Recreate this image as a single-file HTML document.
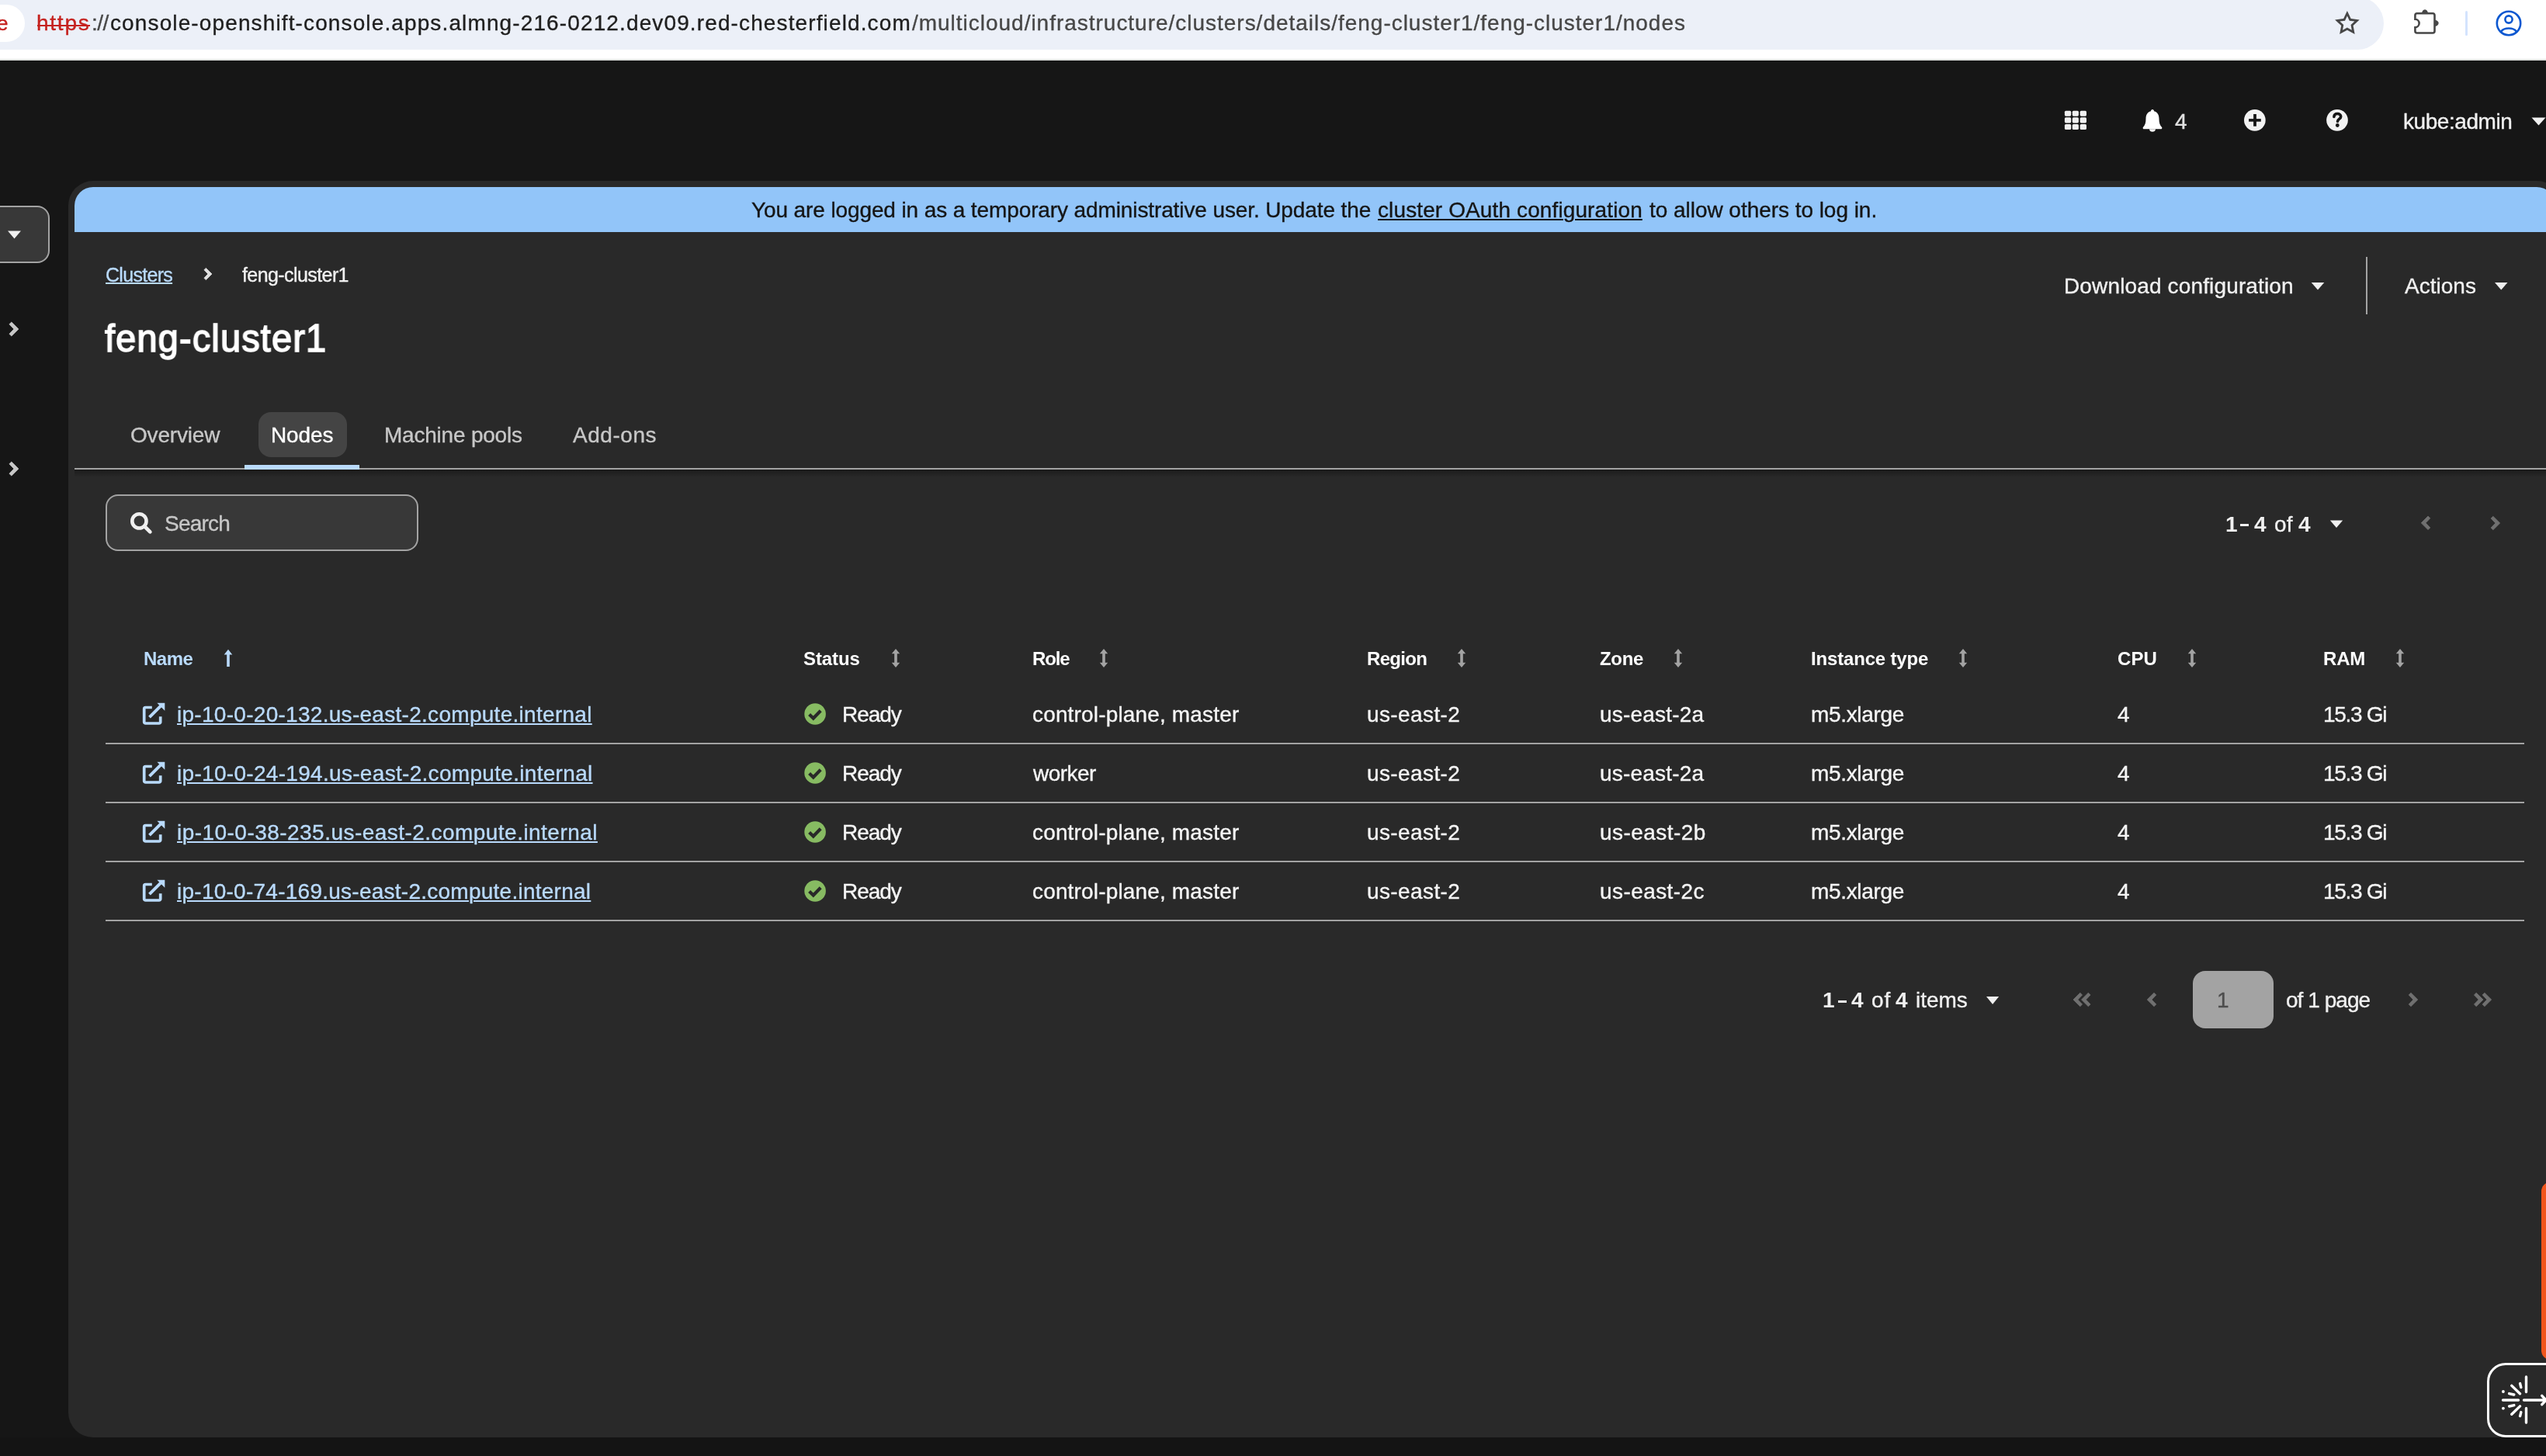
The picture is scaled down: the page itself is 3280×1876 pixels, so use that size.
<!DOCTYPE html>
<html><head><meta charset="utf-8"><style>
html,body{margin:0;padding:0;}
body{width:3280px;height:1876px;overflow:hidden;background:#161616;position:relative;font-family:"Liberation Sans",sans-serif;}
.t{position:absolute;white-space:nowrap;will-change:transform;}
.r{position:absolute;display:block;}
</style></head><body>
<div class="r" style="left:0;top:1852px;width:3280px;height:24px;background:#141414;"></div>
<div class="r" style="left:0px;top:0px;width:3280px;height:77px;background:#ffffff;"></div>
<div class="r" style="left:0px;top:76px;width:3280px;height:2px;background:#dfe2df;"></div>
<div class="r" style="left:-40px;top:-4px;width:3111px;height:68px;background:#ecf0f8;border-radius:0 34px 34px 0;"></div>
<div class="r" style="left:-40px;top:6px;width:72px;height:48px;background:#ffffff;border-radius:0 24px 24px 0;"></div>
<div class="t" style="left:-4.00px;top:16.69px;font-size:26px;line-height:26px;color:#c5221f;letter-spacing:0.000px;-webkit-text-stroke:0.35px #c5221f;">e</div>
<div class="t" style="left:47.00px;top:16.40px;font-size:28px;line-height:28px;color:#c5221f;letter-spacing:1.750px;-webkit-text-stroke:0.35px #c5221f;">https</div>
<div class="r" style="left:48px;top:32px;width:68px;height:2px;background:#c5221f;"></div>
<div class="t" style="left:118.00px;top:16.40px;font-size:28px;line-height:28px;color:#474747;letter-spacing:-0.500px;-webkit-text-stroke:0.35px #474747;">://</div>
<div class="t" style="left:142.30px;top:16.40px;font-size:28px;line-height:28px;color:#1f1f1f;letter-spacing:1.123px;-webkit-text-stroke:0.35px #1f1f1f;">console-openshift-console.apps.almng-216-0212.dev09.red-chesterfield.com</div>
<div class="t" style="left:1175.00px;top:16.40px;font-size:28px;line-height:28px;color:#474747;letter-spacing:0.982px;-webkit-text-stroke:0.35px #474747;">/multicloud/infrastructure/clusters/details/feng-cluster1/feng-cluster1/nodes</div>
<svg class="r" style="left:3000px;top:8px;" width="50" height="44" viewBox="3000 8 50 44"><path d="M3023.90 14.00 L3028.66 24.05 L3039.69 25.47 L3031.60 33.10 L3033.66 44.03 L3023.90 38.70 L3014.14 44.03 L3016.20 33.10 L3008.11 25.47 L3019.14 24.05 Z M3023.90 20.60 L3026.78 26.64 L3033.41 27.51 L3028.56 32.11 L3029.78 38.69 L3023.90 35.50 L3018.02 38.69 L3019.24 32.11 L3014.39 27.51 L3021.02 26.64 Z" fill="#474747" fill-rule="evenodd"/></svg>
<svg class="r" style="left:3100px;top:5px;" width="60" height="50" viewBox="3100 5 60 50"><path d="M3111.4 24.8 V19.8 A2.5 2.5 0 0 1 3113.9 17.3 H3134 A2.5 2.5 0 0 1 3136.5 19.8 V40 A2.5 2.5 0 0 1 3134 42.5 H3113.9 A2.5 2.5 0 0 1 3111.4 40 V35.2 A5.2 5.2 0 0 0 3111.4 24.8 Z" fill="none" stroke="#474747" stroke-width="2.6"/><path d="M3120 17.5 A4 5.3 0 0 1 3128 17.5 Z M3136.3 25.8 A5.4 4.05 0 0 1 3136.3 33.9 Z" fill="#474747"/></svg>
<div class="r" style="left:3176px;top:14px;width:3px;height:32px;background:#d3e3fd;border-radius:2px;"></div>
<svg class="r" style="left:3214px;top:12px;" width="36" height="36" viewBox="0 0 36 36"><circle cx="18" cy="18" r="15.2" fill="none" stroke="#0b57d0" stroke-width="2.6"/><circle cx="18" cy="13" r="4.6" fill="none" stroke="#0b57d0" stroke-width="2.6"/><path d="M8.2 28.5 C12 23.2 24 23.2 27.8 28.5" fill="none" stroke="#0b57d0" stroke-width="2.6"/></svg>
<svg class="r" style="left:2650px;top:135px;" width="45" height="40" viewBox="0 0 45 40"><rect x="9.9" y="7.7" width="8.3" height="7.0" rx="1.6" fill="#f0f0f0"/><rect x="9.9" y="16.2" width="8.3" height="7.2" rx="1.6" fill="#f0f0f0"/><rect x="9.9" y="25.0" width="8.3" height="7.1" rx="1.6" fill="#f0f0f0"/><rect x="19.8" y="7.7" width="8.1" height="7.0" rx="1.6" fill="#f0f0f0"/><rect x="19.8" y="16.2" width="8.1" height="7.2" rx="1.6" fill="#f0f0f0"/><rect x="19.8" y="25.0" width="8.1" height="7.1" rx="1.6" fill="#f0f0f0"/><rect x="29.7" y="7.7" width="8.3" height="7.0" rx="1.6" fill="#f0f0f0"/><rect x="29.7" y="16.2" width="8.3" height="7.2" rx="1.6" fill="#f0f0f0"/><rect x="29.7" y="25.0" width="8.3" height="7.1" rx="1.6" fill="#f0f0f0"/></svg>
<svg class="r" style="left:2755px;top:138px;" width="36" height="34" viewBox="0 0 36 34"><path d="M18 3 C19.3 3 20 4 20 5.2 C24.5 6.3 26.5 10 26.5 15 C26.5 20 27.5 23.5 30.3 26.3 L30.3 27 C30.3 27.8 29.8 28.3 29 28.3 L7 28.3 C6.2 28.3 5.7 27.8 5.7 27 L5.7 26.3 C8.5 23.5 9.5 20 9.5 15 C9.5 10 11.5 6.3 16 5.2 C16 4 16.7 3 18 3 Z M14 28.5 L22 28.5 C22 30.5 20.2 31.8 18 31.8 C15.8 31.8 14 30.5 14 28.5 Z" fill="#ffffff"/></svg>
<div class="t" style="left:2802.00px;top:143.00px;font-size:28px;line-height:28px;color:#e0e0e0;letter-spacing:0.000px;-webkit-text-stroke:0.35px #e0e0e0;">4</div>
<svg class="r" style="left:2886px;top:136px;" width="38" height="38" viewBox="0 0 38 38"><circle cx="18.85" cy="18.85" r="13.85" fill="#f2f2f2"/><rect x="11.1" y="17.1" width="15.7" height="3.6" fill="#161616"/><rect x="17.1" y="11" width="3.8" height="15.7" fill="#161616"/></svg>
<svg class="r" style="left:2992px;top:136px;" width="38" height="38" viewBox="0 0 38 38"><circle cx="19" cy="18.85" r="13.85" fill="#f2f2f2"/><path d="M14.9 14.4 C15.1 11.9 16.9 10.5 19.3 10.5 C21.8 10.5 23.7 12 23.7 14.2 C23.7 17.3 19.5 17.5 19.5 20.4" fill="none" stroke="#161616" stroke-width="3.6" stroke-linecap="round"/><circle cx="19.3" cy="25.5" r="2.4" fill="#161616"/></svg>
<div class="t" style="left:3096.00px;top:142.80px;font-size:28px;line-height:28px;color:#f0f0f0;letter-spacing:-0.444px;-webkit-text-stroke:0.35px #f0f0f0;">kube:admin</div>
<svg class="r" style="left:3258px;top:148px;" width="24" height="16" viewBox="0 0 24 16"><path d="M3.5 3.6 L21.5 3.6 L12.5 13.5 Z" fill="#f0f0f0"/></svg>
<div class="r" style="left:-20px;top:265px;width:84px;height:74px;background:#383838;border:2px solid #a3a3a3;border-radius:16px;box-sizing:border-box;"></div>
<svg class="r" style="left:6px;top:295px;" width="26" height="16" viewBox="0 0 26 16"><path d="M4 2.5 L21 2.5 L12.5 12.5 Z" fill="#f0f0f0"/></svg>
<svg class="r" style="left:10px;top:413px;" width="17" height="24" viewBox="10 413 17 24"><path d="M23.90 424.00 L14.84 415.04 L11.95 417.72 L17.93 424.00 L11.95 430.28 L14.84 432.96 Z" fill="#c7c7c7" stroke="#c7c7c7" stroke-width="0.8" stroke-linejoin="round"/></svg>
<svg class="r" style="left:10px;top:593px;" width="17" height="24" viewBox="10 593 17 24"><path d="M23.90 604.00 L14.84 595.04 L11.95 597.72 L17.93 604.00 L11.95 610.28 L14.84 612.96 Z" fill="#c7c7c7" stroke="#c7c7c7" stroke-width="0.8" stroke-linejoin="round"/></svg>
<div class="r" style="left:88px;top:233px;width:3212px;height:1619px;background:#292929;border-radius:32px;"></div>
<div class="r" style="left:96px;top:241px;width:3196px;height:58px;background:#92c5f9;border-radius:24px 24px 0 0;"></div>
<div class="t" style="left:968.00px;top:256.80px;font-size:28px;line-height:28px;color:#151515;letter-spacing:-0.111px;-webkit-text-stroke:0.35px #151515;">You are logged in as a temporary administrative user. Update the</div>
<div class="t" style="left:1775.00px;top:256.80px;font-size:28px;line-height:28px;color:#151515;letter-spacing:0.115px;-webkit-text-stroke:0.35px #151515;text-decoration:underline;text-decoration-thickness:2px;text-underline-offset:2px;">cluster OAuth configuration</div>
<div class="t" style="left:2125.00px;top:256.80px;font-size:28px;line-height:28px;color:#151515;letter-spacing:-0.040px;-webkit-text-stroke:0.35px #151515;">to allow others to log in.</div>
<div class="t" style="left:135.90px;top:341.74px;font-size:25px;line-height:25px;color:#b9dafc;letter-spacing:-0.700px;-webkit-text-stroke:0.35px #b9dafc;text-decoration:underline;text-decoration-thickness:2px;text-underline-offset:1px;">Clusters</div>
<svg class="r" style="left:261px;top:343px;" width="16" height="21" viewBox="261 343 16 21"><path d="M273.00 353.00 L265.34 345.43 L262.91 347.69 L267.95 353.00 L262.91 358.31 L265.34 360.57 Z" fill="#e0e0e0" stroke="#e0e0e0" stroke-width="0.8" stroke-linejoin="round"/></svg>
<div class="t" style="left:312.00px;top:341.74px;font-size:25px;line-height:25px;color:#f0f0f0;letter-spacing:-0.583px;-webkit-text-stroke:0.35px #f0f0f0;">feng-cluster1</div>
<div class="t" style="left:135.40px;top:411.18px;font-size:50px;line-height:50px;color:#ffffff;letter-spacing:1.191px;-webkit-text-stroke:1.6px #ffffff;transform:scaleX(0.94);transform-origin:0 0;">feng-cluster1</div>
<div class="t" style="left:2659.00px;top:355.00px;font-size:28px;line-height:28px;color:#f0f0f0;letter-spacing:0.143px;-webkit-text-stroke:0.35px #f0f0f0;">Download configuration</div>
<svg class="r" style="left:2974px;top:360px;" width="24" height="18" viewBox="0 0 24 18"><path d="M3.7 4 L20.3 4 L12 13.6 Z" fill="#f0f0f0"/></svg>
<div class="r" style="left:3048px;top:331px;width:2px;height:74px;background:#a3a3a3;"></div>
<div class="t" style="left:3097.60px;top:355.00px;font-size:28px;line-height:28px;color:#f0f0f0;letter-spacing:0.017px;-webkit-text-stroke:0.35px #f0f0f0;">Actions</div>
<svg class="r" style="left:3210px;top:360px;" width="24" height="18" viewBox="0 0 24 18"><path d="M4 4 L20.5 4 L12.25 13.6 Z" fill="#f0f0f0"/></svg>
<div class="t" style="left:168.00px;top:547.30px;font-size:28px;line-height:28px;color:#c7c7c7;letter-spacing:-0.171px;-webkit-text-stroke:0.35px #c7c7c7;">Overview</div>
<div class="r" style="left:333px;top:531px;width:114px;height:58px;background:#444444;border-radius:16px;"></div>
<div class="t" style="left:349.00px;top:547.30px;font-size:28px;line-height:28px;color:#ffffff;letter-spacing:-0.100px;-webkit-text-stroke:0.35px #ffffff;">Nodes</div>
<div class="t" style="left:495.00px;top:547.30px;font-size:28px;line-height:28px;color:#c7c7c7;letter-spacing:-0.217px;-webkit-text-stroke:0.35px #c7c7c7;">Machine pools</div>
<div class="t" style="left:737.80px;top:547.30px;font-size:28px;line-height:28px;color:#c7c7c7;letter-spacing:0.533px;-webkit-text-stroke:0.35px #c7c7c7;">Add-ons</div>
<div class="r" style="left:96px;top:605px;width:3204px;height:10px;background:linear-gradient(#1a1a1a,rgba(41,41,41,0));"></div>
<div class="r" style="left:96px;top:603px;width:3200px;height:2px;background:#a3a3a3;"></div>
<div class="r" style="left:315px;top:599px;width:148px;height:6px;background:#b9dafc;"></div>
<div class="r" style="left:136px;top:637px;width:403px;height:73px;background:#383838;border:2px solid #a3a3a3;border-radius:16px;box-sizing:border-box;"></div>
<svg class="r" style="left:164px;top:656px;" width="36" height="36" viewBox="0 0 36 36"><circle cx="15.4" cy="15.4" r="9.1" fill="none" stroke="#f0f0f0" stroke-width="4.6"/><path d="M22 22 L29.4 29.4" stroke="#f0f0f0" stroke-width="4.6" stroke-linecap="round"/></svg>
<div class="t" style="left:211.50px;top:661.10px;font-size:28px;line-height:28px;color:#c7c7c7;letter-spacing:-0.800px;-webkit-text-stroke:0.35px #c7c7c7;">Search</div>
<div class="t" style="left:2867.00px;top:661.50px;font-size:28px;line-height:28px;color:#f0f0f0;letter-spacing:0.000px;font-weight:700;">1</div>
<div class="r" style="left:2886px;top:674.8px;width:11px;height:3.4px;background:#f0f0f0;"></div>
<div class="t" style="left:2903.70px;top:661.50px;font-size:28px;line-height:28px;color:#f0f0f0;letter-spacing:0.000px;font-weight:700;">4</div>
<div class="t" style="left:2929.80px;top:661.50px;font-size:28px;line-height:28px;color:#f0f0f0;letter-spacing:0.300px;-webkit-text-stroke:0.35px #f0f0f0;">of</div>
<div class="t" style="left:2960.80px;top:661.50px;font-size:28px;line-height:28px;color:#f0f0f0;letter-spacing:0.000px;font-weight:700;">4</div>
<svg class="r" style="left:2998px;top:666px;" width="24" height="18" viewBox="0 0 24 18"><path d="M3.9 4.4 L20.2 4.4 L12 14 Z" fill="#f0f0f0"/></svg>
<svg class="r" style="left:3117px;top:663px;" width="17" height="24" viewBox="3117 663 17 24"><path d="M3119.20 673.80 L3128.00 665.10 L3130.80 667.70 L3125.00 673.80 L3130.80 679.90 L3128.00 682.50 Z" fill="#707070" stroke="#707070" stroke-width="0.8" stroke-linejoin="round"/></svg>
<svg class="r" style="left:3207px;top:663px;" width="17" height="24" viewBox="3207 663 17 24"><path d="M3220.70 674.00 L3211.90 665.30 L3209.10 667.90 L3214.90 674.00 L3209.10 680.10 L3211.90 682.70 Z" fill="#707070" stroke="#707070" stroke-width="0.8" stroke-linejoin="round"/></svg>
<div class="t" style="left:184.50px;top:837.38px;font-size:24px;line-height:24px;color:#b9dafc;letter-spacing:-0.500px;font-weight:700;">Name</div>
<svg class="r" style="left:282px;top:834px;" width="24" height="28" viewBox="0 0 24 28"><path d="M12 2.7 L17.3 9.5 L13.8 9.5 L13.8 25 L10.2 25 L10.2 9.5 L6.7 9.5 Z" fill="#b9dafc"/></svg>
<div class="t" style="left:1035.40px;top:837.38px;font-size:24px;line-height:24px;color:#ffffff;letter-spacing:-0.100px;font-weight:700;">Status</div>
<svg class="r" style="left:1142px;top:834px;" width="24" height="28" viewBox="0 0 24 28"><path d="M12 2 L17.2 8.2 L13.8 8.2 L13.8 19.8 L17.2 19.8 L12 26 L6.8 19.8 L10.2 19.8 L10.2 8.2 L6.8 8.2 Z" fill="#a3a3a3"/></svg>
<div class="t" style="left:1329.50px;top:837.38px;font-size:24px;line-height:24px;color:#ffffff;letter-spacing:-1.167px;font-weight:700;">Role</div>
<svg class="r" style="left:1410px;top:834px;" width="24" height="28" viewBox="0 0 24 28"><path d="M12 2 L17.2 8.2 L13.8 8.2 L13.8 19.8 L17.2 19.8 L12 26 L6.8 19.8 L10.2 19.8 L10.2 8.2 L6.8 8.2 Z" fill="#a3a3a3"/></svg>
<div class="t" style="left:1760.80px;top:837.38px;font-size:24px;line-height:24px;color:#ffffff;letter-spacing:-0.660px;font-weight:700;">Region</div>
<svg class="r" style="left:1871px;top:834px;" width="24" height="28" viewBox="0 0 24 28"><path d="M12 2 L17.2 8.2 L13.8 8.2 L13.8 19.8 L17.2 19.8 L12 26 L6.8 19.8 L10.2 19.8 L10.2 8.2 L6.8 8.2 Z" fill="#a3a3a3"/></svg>
<div class="t" style="left:2061.00px;top:837.38px;font-size:24px;line-height:24px;color:#ffffff;letter-spacing:-0.333px;font-weight:700;">Zone</div>
<svg class="r" style="left:2150px;top:834px;" width="24" height="28" viewBox="0 0 24 28"><path d="M12 2 L17.2 8.2 L13.8 8.2 L13.8 19.8 L17.2 19.8 L12 26 L6.8 19.8 L10.2 19.8 L10.2 8.2 L6.8 8.2 Z" fill="#a3a3a3"/></svg>
<div class="t" style="left:2332.70px;top:837.38px;font-size:24px;line-height:24px;color:#ffffff;letter-spacing:-0.167px;font-weight:700;">Instance type</div>
<svg class="r" style="left:2517px;top:834px;" width="24" height="28" viewBox="0 0 24 28"><path d="M12 2 L17.2 8.2 L13.8 8.2 L13.8 19.8 L17.2 19.8 L12 26 L6.8 19.8 L10.2 19.8 L10.2 8.2 L6.8 8.2 Z" fill="#a3a3a3"/></svg>
<div class="t" style="left:2728.20px;top:837.38px;font-size:24px;line-height:24px;color:#ffffff;letter-spacing:0.100px;font-weight:700;">CPU</div>
<svg class="r" style="left:2812px;top:834px;" width="24" height="28" viewBox="0 0 24 28"><path d="M12 2 L17.2 8.2 L13.8 8.2 L13.8 19.8 L17.2 19.8 L12 26 L6.8 19.8 L10.2 19.8 L10.2 8.2 L6.8 8.2 Z" fill="#a3a3a3"/></svg>
<div class="t" style="left:2992.70px;top:837.38px;font-size:24px;line-height:24px;color:#ffffff;letter-spacing:-0.200px;font-weight:700;">RAM</div>
<svg class="r" style="left:3080px;top:834px;" width="24" height="28" viewBox="0 0 24 28"><path d="M12 2 L17.2 8.2 L13.8 8.2 L13.8 19.8 L17.2 19.8 L12 26 L6.8 19.8 L10.2 19.8 L10.2 8.2 L6.8 8.2 Z" fill="#a3a3a3"/></svg>
<svg class="r" style="left:176px;top:900.0px;" width="40" height="40" viewBox="176 900 40 40"><path d="M195.8 911.5 H187.5 A1.8 1.8 0 0 0 185.7 913.3 V930.2 A1.8 1.8 0 0 0 187.5 932 H204.9 A1.8 1.8 0 0 0 206.7 930.2 V923.3" fill="none" stroke="#b9dafc" stroke-width="3.7"/><path d="M202.4 905.8 H212.3 V915.7 Z" fill="#b9dafc"/><path d="M192.5 924.2 L207.5 909.2" stroke="#b9dafc" stroke-width="3.9"/></svg>
<div class="t" style="left:227.50px;top:906.60px;font-size:28px;line-height:28px;color:#b9dafc;letter-spacing:0.287px;-webkit-text-stroke:0.35px #b9dafc;text-decoration:underline;text-decoration-thickness:2px;text-underline-offset:2px;">ip-10-0-20-132.us-east-2.compute.internal</div>
<svg class="r" style="left:1032px;top:902.0px;" width="36" height="36" viewBox="0 0 36 36"><circle cx="18.1" cy="18" r="13.8" fill="#87bb62"/><path d="M10.6 18.4 L15.8 23.5 L25.2 13.8" fill="none" stroke="#292929" stroke-width="4.2" stroke-linecap="butt"/></svg>
<div class="t" style="left:1084.90px;top:906.60px;font-size:28px;line-height:28px;color:#f5f5f5;letter-spacing:-1.075px;-webkit-text-stroke:0.35px #f5f5f5;">Ready</div>
<div class="t" style="left:1329.50px;top:906.60px;font-size:28px;line-height:28px;color:#f5f5f5;letter-spacing:0.160px;-webkit-text-stroke:0.35px #f5f5f5;">control-plane, master</div>
<div class="t" style="left:1760.80px;top:906.60px;font-size:28px;line-height:28px;color:#f5f5f5;letter-spacing:0.400px;-webkit-text-stroke:0.35px #f5f5f5;">us-east-2</div>
<div class="t" style="left:2061.00px;top:906.60px;font-size:28px;line-height:28px;color:#f5f5f5;letter-spacing:0.200px;-webkit-text-stroke:0.35px #f5f5f5;">us-east-2a</div>
<div class="t" style="left:2332.70px;top:906.60px;font-size:28px;line-height:28px;color:#f5f5f5;letter-spacing:-0.337px;-webkit-text-stroke:0.35px #f5f5f5;">m5.xlarge</div>
<div class="t" style="left:2728.00px;top:906.60px;font-size:28px;line-height:28px;color:#f5f5f5;letter-spacing:0.000px;-webkit-text-stroke:0.35px #f5f5f5;">4</div>
<div class="t" style="left:2992.70px;top:906.60px;font-size:28px;line-height:28px;color:#f5f5f5;letter-spacing:-1.283px;-webkit-text-stroke:0.35px #f5f5f5;">15.3 Gi</div>
<div class="r" style="left:136px;top:957px;width:3116px;height:2px;background:#a3a3a3;"></div>
<svg class="r" style="left:176px;top:976.0px;" width="40" height="40" viewBox="176 900 40 40"><path d="M195.8 911.5 H187.5 A1.8 1.8 0 0 0 185.7 913.3 V930.2 A1.8 1.8 0 0 0 187.5 932 H204.9 A1.8 1.8 0 0 0 206.7 930.2 V923.3" fill="none" stroke="#b9dafc" stroke-width="3.7"/><path d="M202.4 905.8 H212.3 V915.7 Z" fill="#b9dafc"/><path d="M192.5 924.2 L207.5 909.2" stroke="#b9dafc" stroke-width="3.9"/></svg>
<div class="t" style="left:227.50px;top:982.60px;font-size:28px;line-height:28px;color:#b9dafc;letter-spacing:0.307px;-webkit-text-stroke:0.35px #b9dafc;text-decoration:underline;text-decoration-thickness:2px;text-underline-offset:2px;">ip-10-0-24-194.us-east-2.compute.internal</div>
<svg class="r" style="left:1032px;top:978.0px;" width="36" height="36" viewBox="0 0 36 36"><circle cx="18.1" cy="18" r="13.8" fill="#87bb62"/><path d="M10.6 18.4 L15.8 23.5 L25.2 13.8" fill="none" stroke="#292929" stroke-width="4.2" stroke-linecap="butt"/></svg>
<div class="t" style="left:1084.90px;top:982.60px;font-size:28px;line-height:28px;color:#f5f5f5;letter-spacing:-1.075px;-webkit-text-stroke:0.35px #f5f5f5;">Ready</div>
<div class="t" style="left:1330.50px;top:982.60px;font-size:28px;line-height:28px;color:#f5f5f5;letter-spacing:-0.527px;-webkit-text-stroke:0.35px #f5f5f5;">worker</div>
<div class="t" style="left:1760.80px;top:982.60px;font-size:28px;line-height:28px;color:#f5f5f5;letter-spacing:0.400px;-webkit-text-stroke:0.35px #f5f5f5;">us-east-2</div>
<div class="t" style="left:2061.00px;top:982.60px;font-size:28px;line-height:28px;color:#f5f5f5;letter-spacing:0.200px;-webkit-text-stroke:0.35px #f5f5f5;">us-east-2a</div>
<div class="t" style="left:2332.70px;top:982.60px;font-size:28px;line-height:28px;color:#f5f5f5;letter-spacing:-0.337px;-webkit-text-stroke:0.35px #f5f5f5;">m5.xlarge</div>
<div class="t" style="left:2728.00px;top:982.60px;font-size:28px;line-height:28px;color:#f5f5f5;letter-spacing:0.000px;-webkit-text-stroke:0.35px #f5f5f5;">4</div>
<div class="t" style="left:2992.70px;top:982.60px;font-size:28px;line-height:28px;color:#f5f5f5;letter-spacing:-1.283px;-webkit-text-stroke:0.35px #f5f5f5;">15.3 Gi</div>
<div class="r" style="left:136px;top:1033px;width:3116px;height:2px;background:#a3a3a3;"></div>
<svg class="r" style="left:176px;top:1052.0px;" width="40" height="40" viewBox="176 900 40 40"><path d="M195.8 911.5 H187.5 A1.8 1.8 0 0 0 185.7 913.3 V930.2 A1.8 1.8 0 0 0 187.5 932 H204.9 A1.8 1.8 0 0 0 206.7 930.2 V923.3" fill="none" stroke="#b9dafc" stroke-width="3.7"/><path d="M202.4 905.8 H212.3 V915.7 Z" fill="#b9dafc"/><path d="M192.5 924.2 L207.5 909.2" stroke="#b9dafc" stroke-width="3.9"/></svg>
<div class="t" style="left:227.50px;top:1058.60px;font-size:28px;line-height:28px;color:#b9dafc;letter-spacing:0.463px;-webkit-text-stroke:0.35px #b9dafc;text-decoration:underline;text-decoration-thickness:2px;text-underline-offset:2px;">ip-10-0-38-235.us-east-2.compute.internal</div>
<svg class="r" style="left:1032px;top:1054.0px;" width="36" height="36" viewBox="0 0 36 36"><circle cx="18.1" cy="18" r="13.8" fill="#87bb62"/><path d="M10.6 18.4 L15.8 23.5 L25.2 13.8" fill="none" stroke="#292929" stroke-width="4.2" stroke-linecap="butt"/></svg>
<div class="t" style="left:1084.90px;top:1058.60px;font-size:28px;line-height:28px;color:#f5f5f5;letter-spacing:-1.075px;-webkit-text-stroke:0.35px #f5f5f5;">Ready</div>
<div class="t" style="left:1329.50px;top:1058.60px;font-size:28px;line-height:28px;color:#f5f5f5;letter-spacing:0.160px;-webkit-text-stroke:0.35px #f5f5f5;">control-plane, master</div>
<div class="t" style="left:1760.80px;top:1058.60px;font-size:28px;line-height:28px;color:#f5f5f5;letter-spacing:0.400px;-webkit-text-stroke:0.35px #f5f5f5;">us-east-2</div>
<div class="t" style="left:2061.00px;top:1058.60px;font-size:28px;line-height:28px;color:#f5f5f5;letter-spacing:0.444px;-webkit-text-stroke:0.35px #f5f5f5;">us-east-2b</div>
<div class="t" style="left:2332.70px;top:1058.60px;font-size:28px;line-height:28px;color:#f5f5f5;letter-spacing:-0.337px;-webkit-text-stroke:0.35px #f5f5f5;">m5.xlarge</div>
<div class="t" style="left:2728.00px;top:1058.60px;font-size:28px;line-height:28px;color:#f5f5f5;letter-spacing:0.000px;-webkit-text-stroke:0.35px #f5f5f5;">4</div>
<div class="t" style="left:2992.70px;top:1058.60px;font-size:28px;line-height:28px;color:#f5f5f5;letter-spacing:-1.283px;-webkit-text-stroke:0.35px #f5f5f5;">15.3 Gi</div>
<div class="r" style="left:136px;top:1109px;width:3116px;height:2px;background:#a3a3a3;"></div>
<svg class="r" style="left:176px;top:1128.0px;" width="40" height="40" viewBox="176 900 40 40"><path d="M195.8 911.5 H187.5 A1.8 1.8 0 0 0 185.7 913.3 V930.2 A1.8 1.8 0 0 0 187.5 932 H204.9 A1.8 1.8 0 0 0 206.7 930.2 V923.3" fill="none" stroke="#b9dafc" stroke-width="3.7"/><path d="M202.4 905.8 H212.3 V915.7 Z" fill="#b9dafc"/><path d="M192.5 924.2 L207.5 909.2" stroke="#b9dafc" stroke-width="3.9"/></svg>
<div class="t" style="left:227.50px;top:1134.60px;font-size:28px;line-height:28px;color:#b9dafc;letter-spacing:0.253px;-webkit-text-stroke:0.35px #b9dafc;text-decoration:underline;text-decoration-thickness:2px;text-underline-offset:2px;">ip-10-0-74-169.us-east-2.compute.internal</div>
<svg class="r" style="left:1032px;top:1130.0px;" width="36" height="36" viewBox="0 0 36 36"><circle cx="18.1" cy="18" r="13.8" fill="#87bb62"/><path d="M10.6 18.4 L15.8 23.5 L25.2 13.8" fill="none" stroke="#292929" stroke-width="4.2" stroke-linecap="butt"/></svg>
<div class="t" style="left:1084.90px;top:1134.60px;font-size:28px;line-height:28px;color:#f5f5f5;letter-spacing:-1.075px;-webkit-text-stroke:0.35px #f5f5f5;">Ready</div>
<div class="t" style="left:1329.50px;top:1134.60px;font-size:28px;line-height:28px;color:#f5f5f5;letter-spacing:0.160px;-webkit-text-stroke:0.35px #f5f5f5;">control-plane, master</div>
<div class="t" style="left:1760.80px;top:1134.60px;font-size:28px;line-height:28px;color:#f5f5f5;letter-spacing:0.400px;-webkit-text-stroke:0.35px #f5f5f5;">us-east-2</div>
<div class="t" style="left:2061.00px;top:1134.60px;font-size:28px;line-height:28px;color:#f5f5f5;letter-spacing:0.422px;-webkit-text-stroke:0.35px #f5f5f5;">us-east-2c</div>
<div class="t" style="left:2332.70px;top:1134.60px;font-size:28px;line-height:28px;color:#f5f5f5;letter-spacing:-0.337px;-webkit-text-stroke:0.35px #f5f5f5;">m5.xlarge</div>
<div class="t" style="left:2728.00px;top:1134.60px;font-size:28px;line-height:28px;color:#f5f5f5;letter-spacing:0.000px;-webkit-text-stroke:0.35px #f5f5f5;">4</div>
<div class="t" style="left:2992.70px;top:1134.60px;font-size:28px;line-height:28px;color:#f5f5f5;letter-spacing:-1.283px;-webkit-text-stroke:0.35px #f5f5f5;">15.3 Gi</div>
<div class="r" style="left:136px;top:1185px;width:3116px;height:2px;background:#a3a3a3;"></div>
<div class="t" style="left:2348.20px;top:1275.20px;font-size:28px;line-height:28px;color:#f0f0f0;letter-spacing:0.000px;font-weight:700;">1</div>
<div class="r" style="left:2368px;top:1288.5px;width:11px;height:3.4px;background:#f0f0f0;"></div>
<div class="t" style="left:2385.20px;top:1275.20px;font-size:28px;line-height:28px;color:#f0f0f0;letter-spacing:0.000px;font-weight:700;">4</div>
<div class="t" style="left:2410.70px;top:1275.20px;font-size:28px;line-height:28px;color:#f0f0f0;letter-spacing:1.000px;-webkit-text-stroke:0.35px #f0f0f0;">of</div>
<div class="t" style="left:2442.10px;top:1275.20px;font-size:28px;line-height:28px;color:#f0f0f0;letter-spacing:0.000px;font-weight:700;">4</div>
<div class="t" style="left:2467.60px;top:1275.20px;font-size:28px;line-height:28px;color:#f0f0f0;letter-spacing:-0.050px;-webkit-text-stroke:0.35px #f0f0f0;">items</div>
<svg class="r" style="left:2555px;top:1280px;" width="24" height="18" viewBox="0 0 24 18"><path d="M4 4 L20.2 4 L12.1 14 Z" fill="#f0f0f0"/></svg>
<svg class="r" style="left:2669px;top:1277px;" width="17" height="24" viewBox="2669 1277 17 24"><path d="M2671.00 1288.00 L2679.80 1279.30 L2682.60 1281.90 L2676.80 1288.00 L2682.60 1294.10 L2679.80 1296.70 Z" fill="#707070" stroke="#707070" stroke-width="0.8" stroke-linejoin="round"/></svg>
<svg class="r" style="left:2680px;top:1277px;" width="17" height="24" viewBox="2680 1277 17 24"><path d="M2681.50 1288.00 L2690.30 1279.30 L2693.10 1281.90 L2687.30 1288.00 L2693.10 1294.10 L2690.30 1296.70 Z" fill="#707070" stroke="#707070" stroke-width="0.8" stroke-linejoin="round"/></svg>
<svg class="r" style="left:2764px;top:1277px;" width="17" height="24" viewBox="2764 1277 17 24"><path d="M2766.20 1288.00 L2775.00 1279.30 L2777.80 1281.90 L2772.00 1288.00 L2777.80 1294.10 L2775.00 1296.70 Z" fill="#707070" stroke="#707070" stroke-width="0.8" stroke-linejoin="round"/></svg>
<div class="r" style="left:2825px;top:1251px;width:104px;height:74px;background:#a3a3a3;border-radius:16px;"></div>
<div class="t" style="left:2856.00px;top:1275.20px;font-size:28px;line-height:28px;color:#4d4d4d;letter-spacing:0.000px;-webkit-text-stroke:0.35px #4d4d4d;">1</div>
<div class="t" style="left:2945.00px;top:1275.20px;font-size:28px;line-height:28px;color:#f0f0f0;letter-spacing:-0.962px;-webkit-text-stroke:0.35px #f0f0f0;">of 1 page</div>
<svg class="r" style="left:3101px;top:1277px;" width="17" height="24" viewBox="3101 1277 17 24"><path d="M3114.80 1288.00 L3106.00 1279.30 L3103.20 1281.90 L3109.00 1288.00 L3103.20 1294.10 L3106.00 1296.70 Z" fill="#707070" stroke="#707070" stroke-width="0.8" stroke-linejoin="round"/></svg>
<svg class="r" style="left:3185px;top:1277px;" width="17" height="24" viewBox="3185 1277 17 24"><path d="M3199.00 1288.00 L3190.20 1279.30 L3187.40 1281.90 L3193.20 1288.00 L3187.40 1294.10 L3190.20 1296.70 Z" fill="#707070" stroke="#707070" stroke-width="0.8" stroke-linejoin="round"/></svg>
<svg class="r" style="left:3196px;top:1277px;" width="17" height="24" viewBox="3196 1277 17 24"><path d="M3209.70 1288.00 L3200.90 1279.30 L3198.10 1281.90 L3203.90 1288.00 L3198.10 1294.10 L3200.90 1296.70 Z" fill="#707070" stroke="#707070" stroke-width="0.8" stroke-linejoin="round"/></svg>
<div class="r" style="left:3274px;top:1523px;width:40px;height:229px;background:#f0561d;border-radius:12px 0 0 12px;"></div>
<div class="r" style="left:3204px;top:1756px;width:120px;height:96px;background:#292929;border:3.4px solid #ffffff;border-radius:24px;box-sizing:border-box;"></div>
<svg class="r" style="left:3200px;top:1760px;" width="80" height="90" viewBox="3200 1760 80 90"><g stroke="#ffffff" stroke-width="3.4" stroke-linecap="round" fill="none"><path d="M3254.5 1774 V1793.5 M3254.5 1814.5 V1833 M3224.5 1804 H3244.5 M3251.5 1804 H3280 M3274.8 1798.3 L3280 1804 L3274.8 1809.7 M3235.8 1785.4 L3246.5 1795.8 M3235.8 1822.2 L3246.5 1811.9 M3246.6 1782.6 L3247.8 1787.6 M3232.6 1795.6 L3238.8 1797 M3232.6 1812 L3238.8 1810.6 M3247.8 1819.6 L3246.6 1824.6"/></g><circle cx="3224.9" cy="1793" r="1.9" fill="#fff"/><circle cx="3224.9" cy="1814.6" r="1.9" fill="#fff"/></svg>
</body></html>
